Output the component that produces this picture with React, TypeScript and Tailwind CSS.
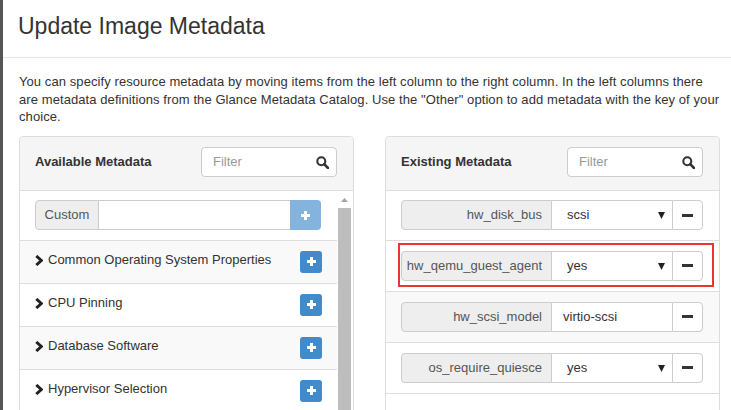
import React from "react";

const Plus = () => (
  <svg width="9" height="9" viewBox="0 0 9 9">
    <rect x="3" y="0" width="3" height="9" fill="#fff" />
    <rect x="0" y="3" width="9" height="3" fill="#fff" />
  </svg>
);

const Minus = () => (
  <svg width="11" height="3" viewBox="0 0 11 3">
    <rect x="0" y="0" width="11" height="3" fill="#333" />
  </svg>
);

const SearchIcon = () => (
  <svg width="13" height="13" viewBox="0 0 13 13">
    <circle cx="5.3" cy="5.3" r="4" fill="none" stroke="#333" strokeWidth="2.1" />
    <line x1="8.2" y1="8.2" x2="12" y2="12" stroke="#333" strokeWidth="2.6" strokeLinecap="round" />
  </svg>
);

const Chevron = () => (
  <svg width="8" height="11" viewBox="0 0 8 11">
    <polyline points="1.3,1 6.3,5.5 1.3,10" fill="none" stroke="#222" strokeWidth="3" />
  </svg>
);

const Caret = () => (
  <svg width="7" height="7" viewBox="0 0 7 7">
    <polygon points="0,0 7,0 3.5,7" fill="#222" />
  </svg>
);

const Filter = () => (
  <div className="relative w-[136px] h-[30px] rounded-[4px] border border-[#ccc] bg-white flex items-center pl-[11px]">
    <span className="text-[13px] text-[#999]">Filter</span>
    <span className="absolute right-[7px] top-[8px] flex">
      <SearchIcon />
    </span>
  </div>
);

const PanelHeader = ({ title }: { title: string }) => (
  <div className="h-[54px] bg-[#f5f5f5] border-b border-[#ddd] flex items-center justify-between pl-[15px] pr-[16px] pb-[3px] rounded-t-[4px]">
    <span className="text-[13px] font-bold text-[#333]">{title}</span>
    <Filter />
  </div>
);

const catalog = [
  { name: "Common Operating System Properties", bg: "bg-[#f9f9f9]" },
  { name: "CPU Pinning", bg: "bg-white" },
  { name: "Database Software", bg: "bg-[#f9f9f9]" },
  { name: "Hypervisor Selection", bg: "bg-white" },
];

type Item = { key: string; value: string; select: boolean; bg: string; h: string; hl?: boolean };

const existing: Item[] = [
  { key: "hw_disk_bus", value: "scsi", select: true, bg: "bg-white", h: "h-[50px]" },
  { key: "hw_qemu_guest_agent", value: "yes", select: true, bg: "bg-white", h: "h-[51px]", hl: true },
  { key: "hw_scsi_model", value: "virtio-scsi", select: false, bg: "bg-[#f9f9f9]", h: "h-[51px]" },
  { key: "os_require_quiesce", value: "yes", select: true, bg: "bg-white", h: "h-[51px]" },
];

export default function App() {
  return (
    <div className="w-[731px] h-[410px] overflow-hidden bg-[#565656] flex font-['Liberation_Sans',Arial,sans-serif] text-[#333]">
      <div className="ml-[3px] flex-1 bg-white">
        <div className="h-[58px] border-b border-[#e5e5e5] pl-[15px] pt-[11px]">
          <h4 className="text-[23px] leading-[30px] font-normal text-[#333]">Update Image Metadata</h4>
        </div>
        <div className="pl-[16px] pt-[15px]">
          <p className="w-[705px] whitespace-nowrap text-[13px] leading-[17.5px] tracking-[0.08px] text-[#333]">
            You can specify resource metadata by moving items from the left column to the right column. In the left
            columns there
            <br />
            are metadata definitions from the Glance Metadata Catalog. Use the "Other" option to add metadata with the
            key of your
            <br />
            choice.
          </p>
          <div className="mt-[10px] flex gap-[31px]">
            {/* Available */}
            <div className="w-[335px] h-[300px] border border-[#ddd] rounded-[4px] bg-white">
              <PanelHeader title="Available Metadata" />
              <div className="flex">
                <div className="w-[317px]">
                  <div className="h-[50px] border-b border-[#ddd] flex items-center pl-[15px]">
                    <div className="flex h-[30px]">
                      <div className="w-[64px] border border-[#ccc] rounded-l-[4px] bg-[#eee] text-[#555] text-[13px] flex items-center justify-center">
                        Custom
                      </div>
                      <div className="w-[191px] border-y border-[#ccc] bg-white" />
                      <div className="w-[31px] rounded-r-[4px] bg-[#84b4dd] flex items-center justify-center">
                        <Plus />
                      </div>
                    </div>
                  </div>
                  {catalog.map((c) => (
                    <div
                      key={c.name}
                      className={`h-[43px] border-b border-[#ddd] flex items-center justify-between pl-[15px] pr-[15px] ${c.bg}`}
                    >
                      <div className="flex items-center gap-[5px] mb-[3px]">
                        <Chevron />
                        <span className="text-[13px] text-[#333]">{c.name}</span>
                      </div>
                      <div className="w-[22px] h-[22px] rounded-[3px] bg-[#428bca] flex items-center justify-center">
                        <Plus />
                      </div>
                    </div>
                  ))}
                </div>
                <div className="w-[16px] flex flex-col items-start pl-[1px] pt-[6px]">
                  <svg width="13" height="6" viewBox="0 0 13 6" className="mb-[5px]">
                    <polygon points="3,5 10,5 6.5,1" fill="#a3a3a3" />
                  </svg>
                  <div className="w-[13px] h-[220px] bg-[#bdbdbd]" />
                </div>
              </div>
            </div>
            {/* Existing */}
            <div className="w-[335px] h-[300px] border border-[#ddd] rounded-[4px] bg-white">
              <PanelHeader title="Existing Metadata" />
              {existing.map((it) => (
                <div
                  key={it.key}
                  className={`relative ${it.h} border-b border-[#ddd] flex items-center pl-[15px] pr-[16px] ${it.bg}`}
                >
                  <div className="flex h-[30px]">
                    <div className="w-[151px] border border-[#ccc] rounded-l-[4px] bg-[#eee] text-[#555] text-[13px] flex items-center justify-end pr-[9px]">
                      {it.key}
                    </div>
                    <div
                      className={`relative w-[120px] border-y border-[#ccc] bg-white text-[13px] text-[#333] flex items-center ${
                        it.select ? "pl-[15px]" : "pl-[11px]"
                      }`}
                    >
                      {it.value}
                      {it.select && (
                        <span className="absolute right-[7px] top-[11px] flex">
                          <Caret />
                        </span>
                      )}
                    </div>
                    <div className="w-[31px] border border-[#ccc] rounded-r-[4px] bg-white flex items-center justify-center">
                      <Minus />
                    </div>
                  </div>
                  {it.hl && (
                    <div className="absolute left-[12px] top-[2px] w-[316px] h-[44px] border-2 border-[#ec3434]" />
                  )}
                </div>
              ))}
            </div>
          </div>
        </div>
      </div>
    </div>
  );
}
